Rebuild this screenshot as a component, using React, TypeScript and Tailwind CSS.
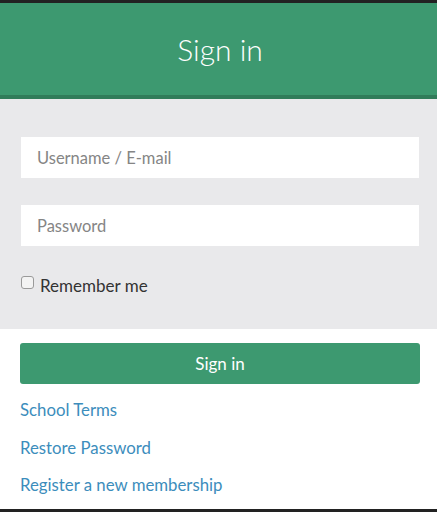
import React from "react";

export default function App() {
  return (
    <div className="w-[437px] h-[512px] bg-white flex flex-col" style={{ fontFamily: "Lato, 'Noto Sans', sans-serif" }}>
      <div className="h-[3px] bg-[#222222]" />
      <div className="h-[96px] bg-[#3d9970] border-b-[4px] border-[#317c5a] flex items-center justify-center">
        <h1 className="text-[30px] font-light text-white leading-none pl-[3px]">Sign in</h1>
      </div>
      <div className="bg-[#e9e9eb] h-[230px] pl-[21px] pr-[18px] pt-[38px] flex flex-col">
        <input
          className="h-[41px] w-full bg-white px-[16px] text-[16.5px] text-[#555] placeholder:text-[#858585] outline-none"
          placeholder="Username / E-mail"
        />
        <input
          type="password"
          className="mt-[27px] h-[41px] w-full bg-white px-[16px] text-[16.5px] text-[#555] placeholder:text-[#858585] outline-none"
          placeholder="Password"
        />
        <label className="mt-[27px] flex items-center gap-[6px] text-[17px] text-[#333]">
          <span className="w-[13px] h-[13px] rounded-[3px] border border-[#9a9a9a] bg-[#f3f3f3] relative top-[-3px]" />
          Remember me
        </label>
      </div>
      <div className="pl-[20px] pr-[17px] pt-[14px] flex flex-col">
        <button className="h-[41px] w-full rounded-[3px] bg-[#3d9970] text-white text-[17px]">Sign in</button>
        <div className="mt-[14px] flex flex-col gap-[14.5px] text-[16.8px] text-[#3c8dbc] leading-[23px]">
          <a>School Terms</a>
          <a>Restore Password</a>
          <a>Register a new membership</a>
        </div>
      </div>
      <div className="flex-1" />
      <div className="h-[3px] bg-[#222222]" />
    </div>
  );
}
